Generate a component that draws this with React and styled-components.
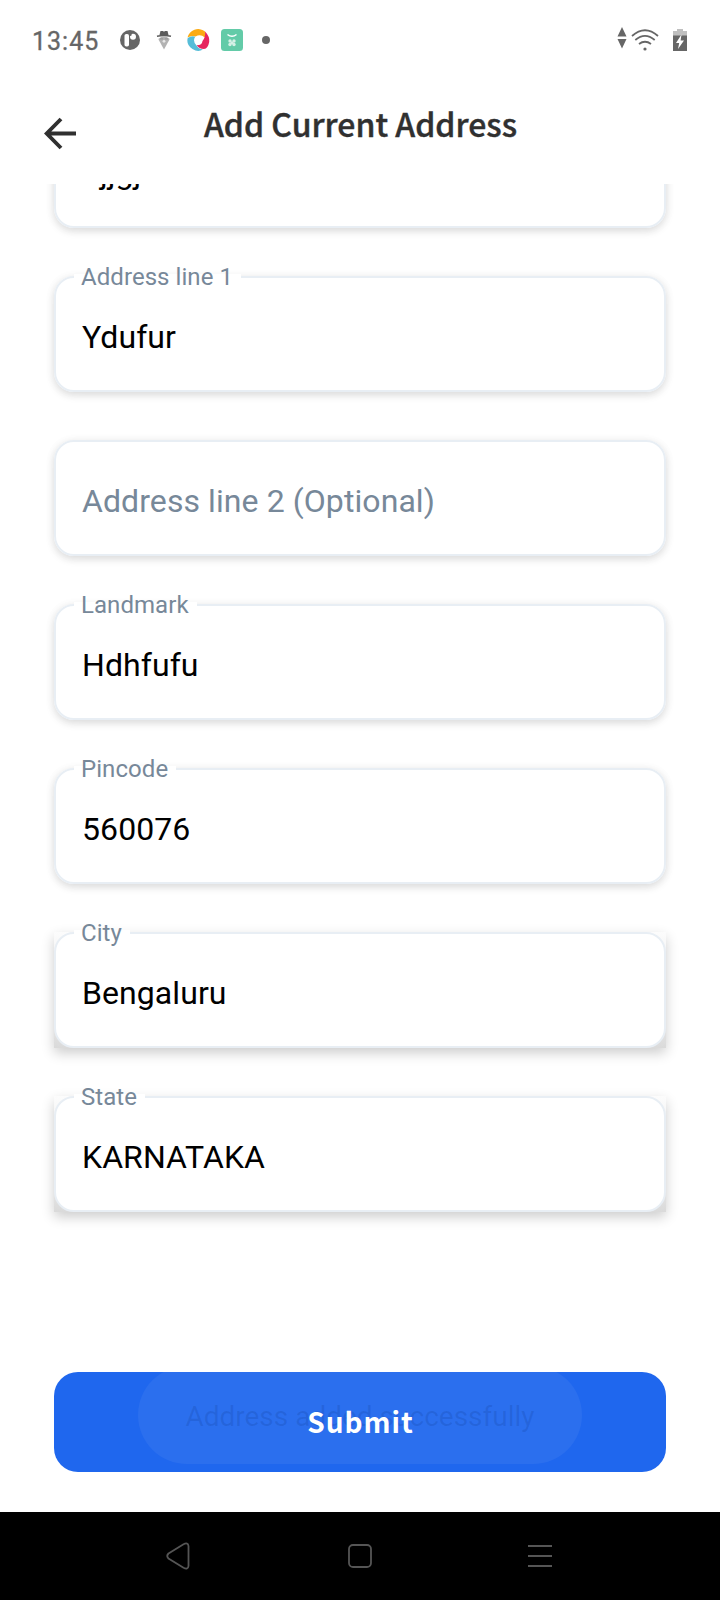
import React from "react";
import styled, { createGlobalStyle, css } from "styled-components";

const GlobalStyle = createGlobalStyle`
  * { box-sizing: border-box; }
  body {
    margin: 0;
    background: #fff;
    font-family: Roboto, "Noto Sans", sans-serif;
  }
`;

const Screen = styled.div`
  width: 720px;
  height: 1600px;
  display: flex;
  flex-direction: column;
  overflow: hidden;
  background: #fff;
`;

const StatusBar = styled.div`
  flex: none;
  height: 80px;
  padding: 0 33px 0 32px;
  display: flex;
  align-items: center;
  color: #666;
`;

const Clock = styled.span`
  width: 81px;
  font-size: 25px;
  line-height: 30px;
  letter-spacing: 1px;
  -webkit-text-stroke: 0.3px #666;
  padding-top: 3px;
  white-space: nowrap;
`;

const Notifications = styled.div`
  display: grid;
  grid-auto-flow: column;
  grid-auto-columns: 34px;
  place-items: center;
`;

const Connectivity = styled.div`
  display: flex;
  align-items: center;
  gap: 4px;
  margin-left: auto;
  padding-right: 14px;
`;

const Header = styled.header`
  flex: none;
  height: 104px;
  display: grid;
  grid-template-columns: 120px 1fr 120px;
  align-items: start;
`;

const BackButton = styled.button`
  border: 0;
  background: none;
  padding: 0;
  margin: 37px 0 0 44px;
  width: 33px;
  height: 33px;
  line-height: 0;
`;

const Title = styled.h1`
  margin: 18px 0 0 1px;
  text-align: center;
  font: 500 32px/50px "Noto Sans CJK SC", sans-serif;
  -webkit-text-stroke: 0.4px #303030;
  color: #303030;
  white-space: nowrap;
`;

const Form = styled.main`
  flex: none;
  height: 1188px;
  overflow: hidden;
  padding: 0 54px;
  display: flex;
  flex-direction: column;
  justify-content: flex-start;
  gap: 48px;
`;

const FieldShell = styled.div`
  flex: none;
  position: relative;
  height: 116px;
  margin-top: ${(p) => (p.$scrolled ? "-72px" : 0)};
  border-radius: 20px;
  box-shadow: 0 3px 8px rgba(0, 0, 0, 0.13), 0 1px 12px rgba(0, 0, 0, 0.04);
  ${(p) =>
    p.$locked &&
    css`
      border-radius: 0;
      background: linear-gradient(#fcfcfc, #ececec 40%, #e6e6e6 80%, #dadada);
      box-shadow: 0 5px 12px rgba(0, 0, 0, 0.2);
    `}
`;

const FieldBox = styled.div`
  height: 116px;
  border: 2px solid #e8eef4;
  border-radius: 20px;
  background: #fff;
  padding: 5px 26px 0;
  display: flex;
  align-items: center;
`;

const FieldLabel = styled.label`
  position: absolute;
  left: 20px;
  top: -13px;
  padding: 0 8px 0 7px;
  background: linear-gradient(transparent 11px, #fff 11px, #fff 19px, transparent 19px);
  font-size: 24px;
  line-height: 28px;
  letter-spacing: 0.06px;
  color: #778899;
  white-space: nowrap;
`;

const FieldValue = styled.span`
  font-size: 32px;
  line-height: 40px;
  letter-spacing: 0.08px;
  padding-left: ${(p) => p.$indent || 0}px;
  color: ${(p) => (p.$placeholder ? "#778899" : "#000")};
  white-space: nowrap;
`;

const Footer = styled.div`
  flex: none;
  height: 140px;
  padding: 0 54px;
  position: relative;
`;

const SubmitButton = styled.button`
  display: block;
  width: 612px;
  height: 100px;
  border: 0;
  border-radius: 24px;
  background: #1f67ee;
  color: #fff;
  padding: 0 0 2px 1px;
  font: 700 28px/44px "Noto Sans CJK SC", sans-serif;
  letter-spacing: 1px;
`;

const SubmitLabel = styled.span`
  position: relative;
  z-index: 1;
`;

const Toast = styled.div`
  position: absolute;
  left: 138px;
  top: -6px;
  width: 444px;
  height: 98px;
  padding-top: 3px;
  border-radius: 49px;
  background: rgba(255, 255, 255, 0.055);
  color: rgba(0, 30, 90, 0.13);
  display: flex;
  align-items: center;
  justify-content: center;
  font-size: 28px;
  line-height: 34px;
  white-space: nowrap;
`;

const NavBar = styled.nav`
  flex: none;
  height: 88px;
  background: #000;
  padding: 0 90px;
  display: grid;
  grid-template-columns: repeat(3, 1fr);
  place-items: center;
`;

const BackTriangle = styled.svg`
  margin-right: 5px;
`;

const PandaIcon = () => (
  <svg width="22" height="22" viewBox="0 0 22 22">
    <circle cx="11" cy="11" r="10" fill="#666" />
    <rect x="5.500" y="5" width="4.500" height="12.500" rx="1.800" fill="#fff" />
    <circle cx="14" cy="7.800" r="3" fill="#fff" />
    <circle cx="11.600" cy="5.800" r="1.100" fill="#666" />
  </svg>
);

const IncognitoIcon = () => (
  <svg width="16" height="20" viewBox="0 0 16 20">
    <path d="M3 8.500Q5 6.500 8 6.500T13 8.500L13.500 9.500 8 19.500 2.500 9.500z" fill="#b3b3b3" />
    <path d="M4.500 1h2.500l1 .7 1-.7h2.500l1 4h-9z" fill="#5c5c5c" />
    <path d="M1 6.200q7-1.500 14 0" stroke="#5c5c5c" strokeWidth="1.500" fill="none" />
    <path d="M4 8.200h3.200v1.200H4zM8.800 8.200H12v1.200H8.800z" fill="#999" />
    <circle cx="8" cy="11.300" r="1.400" fill="#e8e8e8" />
  </svg>
);

const SwirlIcon = () => (
  <svg width="24" height="24" viewBox="0 0 24 24">
    <path d="M1.500 9.500A11 11 0 0 1 18.800 3.200Q19.800 6 18.800 9.500 14.500 5.500 9.500 8.500 5.500 7 1.500 9.500z" fill="#fbab13" />
    <path d="M19 3.500Q24 8.500 23.200 14 22 20.500 18 21 13 21 10.500 17.300 16 17.500 16.500 13 19.800 9 19 3.500z" fill="#e6265f" />
    <path d="M1.700 10Q5.500 7.500 9.200 8.700 6.500 13 10 16.800 12 20.800 17 21.500 12 24.500 6.500 21 0 17 1.700 10z" fill="#56bdd8" />
  </svg>
);

const BagIcon = () => (
  <svg width="22" height="22" viewBox="0 0 22 22">
    <rect width="22" height="22" rx="3.500" fill="#63cba8" />
    <path d="M6.500 5.500Q11 9 15.500 5.500" stroke="#fff" strokeWidth="1.500" fill="none" />
    <g fill="#d5f1e6">
      <circle cx="9" cy="12" r="1.700" />
      <circle cx="13" cy="12" r="1.700" />
      <circle cx="9" cy="15.500" r="1.700" />
      <circle cx="13" cy="15.500" r="1.700" />
      <circle cx="11" cy="13.700" r="1.500" />
    </g>
  </svg>
);

const DotIcon = () => (
  <svg width="8" height="8" viewBox="0 0 8 8">
    <circle cx="4" cy="4" r="4" fill="#666" />
  </svg>
);

const TrafficIcon = () => (
  <svg width="10" height="26" viewBox="0 0 10 26">
    <path d="M5 0l4.500 9.500h-9zM5 21.500l4.500-9.500h-9z" fill="#666" />
  </svg>
);

const WifiIcon = () => (
  <svg width="28" height="22" viewBox="0 0 28 22" fill="none" stroke="#666" strokeWidth="1.800">
    <path d="M1 7Q14-4.500 27 7M4.300 11Q14 2.800 23.700 11M8 15Q14 10.500 20 15" />
    <circle cx="14" cy="20" r="1.600" fill="#666" stroke="none" />
  </svg>
);

const BatteryIcon = () => (
  <svg width="14" height="22" viewBox="0 0 14 22">
    <path d="M4 0h6v2h4v5H0V2h4z" fill="#bfbfbf" />
    <path d="M0 6.500h14V22H0z" fill="#666" />
    <path d="M8.500 5.500L3 14h3.200L5 20l6-8.500H7.600z" fill="#fff" />
  </svg>
);

const BackArrow = () => (
  <svg width="33" height="33" viewBox="0 0 33 33" fill="none" stroke="#303030" strokeWidth="3.900">
    <path d="M2 16.500H32M17 2L2.700 16.500 17 31" />
  </svg>
);

const fields = [
  { value: "jjgj", scrolled: true },
  { label: "Address line 1", value: "Ydufur" },
  { placeholder: "Address line 2 (Optional)" },
  { label: "Landmark", value: "Hdhfufu" },
  { label: "Pincode", value: "560076" },
  { label: "City", value: "Bengaluru", locked: true },
  { label: "State", value: "KARNATAKA", locked: true },
];

function Field({ label, value, placeholder, scrolled, locked }) {
  return (
    <FieldShell $scrolled={scrolled} $locked={locked}>
      <FieldBox>
        <FieldValue $placeholder={!value} $indent={scrolled ? 18 : 0}>
          {value || placeholder}
        </FieldValue>
      </FieldBox>
      {label && <FieldLabel>{label}</FieldLabel>}
    </FieldShell>
  );
}

export default function App() {
  return (
    <Screen>
      <GlobalStyle />
      <StatusBar>
        <Clock>13:45</Clock>
        <Notifications>
          <PandaIcon />
          <IncognitoIcon />
          <SwirlIcon />
          <BagIcon />
          <DotIcon />
        </Notifications>
        <Connectivity>
          <TrafficIcon />
          <WifiIcon />
        </Connectivity>
        <BatteryIcon />
      </StatusBar>
      <Header>
        <BackButton aria-label="Back">
          <BackArrow />
        </BackButton>
        <Title>Add Current Address</Title>
      </Header>
      <Form>
        {fields.map((f) => (
          <Field key={f.label || f.value || f.placeholder} {...f} />
        ))}
      </Form>
      <Footer>
        <Toast>Address added successfully</Toast>
        <SubmitButton>
          <SubmitLabel>Submit</SubmitLabel>
        </SubmitButton>
      </Footer>
      <NavBar>
        <BackTriangle width="24" height="28" viewBox="0 0 24 28" fill="none" stroke="#555" strokeWidth="1.800">
          <path d="M2.500 11.500L17.500 2.200Q22 0 22.500 4V24Q22 28 17.500 25.800L2.500 16.500Q0 14 2.500 11.500z" />
        </BackTriangle>
        <svg width="24" height="24" viewBox="0 0 24 24" fill="none" stroke="#555" strokeWidth="1.800">
          <rect x="1" y="1" width="22" height="22" rx="4" />
        </svg>
        <svg width="24" height="22" viewBox="0 0 24 22" stroke="#555" strokeWidth="1.800">
          <path d="M0 1H24M0 11H24M0 21H24" />
        </svg>
      </NavBar>
    </Screen>
  );
}
